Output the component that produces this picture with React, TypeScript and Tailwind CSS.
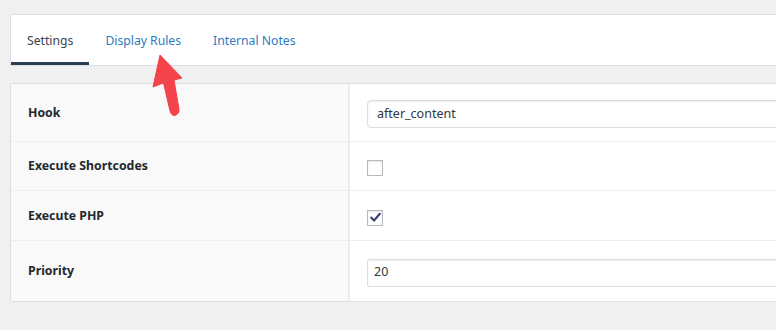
import React from "react";

const rows = [
  { label: "Hook", kind: "text", value: "after_content", h: "h-[57px]" },
  { label: "Execute Shortcodes", kind: "check", checked: false, h: "h-[49px]" },
  { label: "Execute PHP", kind: "check", checked: true, h: "h-[50px]" },
  { label: "Priority", kind: "number", value: "20", h: "h-[61px]" },
];

const Checkbox = ({ checked }: { checked: boolean }) => (
  <div className="w-4 h-4 mt-1 border border-[#b4b9be] bg-white shadow-[inset_0_1px_2px_rgba(0,0,0,0.1)] flex items-center justify-center">
    {checked && (
      <svg width="13" height="13" viewBox="0 0 13 13">
        <path d="M2.2 6.6 L5 9.6 L10.8 2.8" fill="none" stroke="#3b3f73" strokeWidth="2.2" strokeLinecap="round" strokeLinejoin="round" />
      </svg>
    )}
  </div>
);

const App = () => {
  return (
    <div className="relative w-[776px] h-[330px] overflow-hidden bg-[#f0f0f1] pt-[14px] pl-[10px] font-['Noto_Sans',sans-serif]">
      {/* tabs */}
      <div className="w-[900px] h-[52px] bg-white border-t border-l border-b border-[#dcdfe3] flex items-end">
        <div className="px-4 h-full flex items-center border-b-[3px] border-[#2c3e4f] text-[#3c434a] text-[12.2px] pt-[5px]">Settings</div>
        <div className="px-4 h-full flex items-center pt-[2px] text-[#2a7bbf] text-[12.2px]">Display Rules</div>
        <div className="px-4 h-full flex items-center pt-[2px] text-[#2a7bbf] text-[12.2px]">Internal Notes</div>
      </div>

      {/* settings table */}
      <div className="w-[900px] mt-[17px] border-t border-l border-b border-[#dcdfe3] bg-white">
        {rows.map((r, i) => (
          <div key={r.label} className={`flex ${r.h} ${i > 0 ? "border-t border-[#eeeeee]" : ""}`}>
            <div className="w-[339px] bg-[#f9f9f9] border-r-2 border-[#ececec] flex items-center pl-[17px] pt-[1px] text-[12.3px] font-bold text-[#23282d]">
              {r.label}
            </div>
            <div className="flex-1 flex items-center pl-[17px]">
              {r.kind === "check" ? (
                <Checkbox checked={!!r.checked} />
              ) : (
                <div
                  className={`w-full h-[28px] mt-[3px] border border-[#dddddd] bg-white shadow-[inset_0_1px_2px_rgba(0,0,0,0.07)] flex items-center text-[12.5px] text-[#32373c] ${
                    r.kind === "text" ? "rounded-[4px] pl-[9px]" : "rounded-[2px] pl-[6px]"
                  }`}
                >
                  {r.value}
                </div>
              )}
            </div>
          </div>
        ))}
      </div>

      {/* red pointer arrow */}
      <svg className="absolute left-[148px] top-[50px]" width="40" height="72" viewBox="148 50 40 72">
        <path
          d="M160 55 L153 87 L163.5 83 L170 111 Q172 117 176 115 Q180 113 179 109 L174 80 L182 78 Z"
          fill="#f4434b"
          stroke="#f4434b"
          strokeWidth="1"
          strokeLinejoin="round"
        />
      </svg>
    </div>
  );
};

export default App;
